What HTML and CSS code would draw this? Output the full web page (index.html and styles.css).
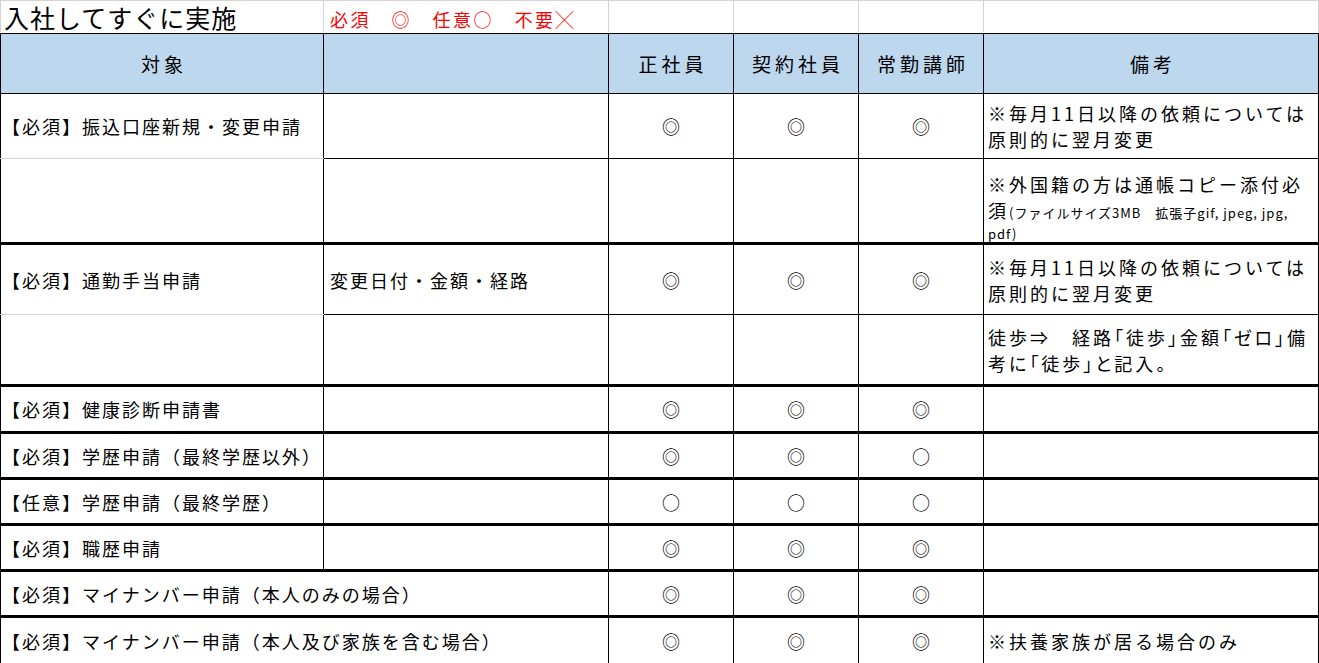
FILE: index.html
```html
<!DOCTYPE html>
<html lang="ja">
<head>
<meta charset="utf-8">
<title>入社してすぐに実施</title>
<link rel="stylesheet" href="styles.css">
</head>
<body>
<table class="sheet">
  <colgroup>
    <col class="col-a"><col class="col-b"><col class="col-m"><col class="col-m"><col class="col-m"><col class="col-f">
  </colgroup>
  <tr class="r-title">
    <td class="title">入社してすぐに実施</td>
    <td class="legend">必須　◎　任意○　不要╳</td>
    <td></td><td></td><td></td><td></td>
  </tr>
  <tr class="r-head">
    <th>対象</th><th></th><th>正社員</th><th>契約社員</th><th>常勤講師</th><th>備考</th>
  </tr>
  <tr class="r-65">
    <td class="item soft-bottom">【必須】振込口座新規・変更申請</td>
    <td class="sub"></td>
    <td class="mark">◎</td><td class="mark">◎</td><td class="mark">◎</td>
    <td class="note"><span class="ln">※毎月11日以降の依頼については</span><span class="ln">原則的に翌月変更</span></td>
  </tr>
  <tr class="r-85 thick">
    <td class="item"></td>
    <td class="sub"></td>
    <td class="mark"></td><td class="mark"></td><td class="mark"></td>
    <td class="note note-top"><span class="ln">※外国籍の方は通帳コピー添付必</span><span class="ln">須<span class="fine">(ファイルサイズ3MB　拡張子gif, jpeg, jpg,</span></span><span class="ln ln-fine">pdf)</span></td>
  </tr>
  <tr class="r-71">
    <td class="item soft-bottom">【必須】通勤手当申請</td>
    <td class="sub">変更日付・金額・経路</td>
    <td class="mark">◎</td><td class="mark">◎</td><td class="mark">◎</td>
    <td class="note"><span class="ln">※毎月11日以降の依頼については</span><span class="ln">原則的に翌月変更</span></td>
  </tr>
  <tr class="r-71 thick">
    <td class="item"></td>
    <td class="sub"></td>
    <td class="mark"></td><td class="mark"></td><td class="mark"></td>
    <td class="note note-prop"><span class="ln">徒歩⇒　経路「徒歩」金額「ゼロ」備</span><span class="ln">考に「徒歩」と記入。</span></td>
  </tr>
  <tr class="r-47 thick">
    <td class="item">【必須】健康診断申請書</td>
    <td class="sub"></td>
    <td class="mark">◎</td><td class="mark">◎</td><td class="mark">◎</td>
    <td class="note"></td>
  </tr>
  <tr class="r-46 thick">
    <td class="item">【必須】学歴申請（最終学歴以外）</td>
    <td class="sub"></td>
    <td class="mark">◎</td><td class="mark">◎</td><td class="mark">○</td>
    <td class="note"></td>
  </tr>
  <tr class="r-46 thick">
    <td class="item">【任意】学歴申請（最終学歴）</td>
    <td class="sub"></td>
    <td class="mark">○</td><td class="mark">○</td><td class="mark">○</td>
    <td class="note"></td>
  </tr>
  <tr class="r-46 thick">
    <td class="item">【必須】職歴申請</td>
    <td class="sub"></td>
    <td class="mark">◎</td><td class="mark">◎</td><td class="mark">◎</td>
    <td class="note"></td>
  </tr>
  <tr class="r-46 thick">
    <td class="item" colspan="2">【必須】マイナンバー申請（本人のみの場合）</td>
    <td class="mark">◎</td><td class="mark">◎</td><td class="mark">◎</td>
    <td class="note"></td>
  </tr>
  <tr class="r-47">
    <td class="item" colspan="2">【必須】マイナンバー申請（本人及び家族を含む場合）</td>
    <td class="mark">◎</td><td class="mark">◎</td><td class="mark">◎</td>
    <td class="note">※扶養家族が居る場合のみ</td>
  </tr>
</table>
</body>
</html>
```

FILE: styles.css
```css
html, body {
  margin: 0;
  padding: 0;
  background: #ffffff;
}

body {
  font-family: "Noto Sans CJK JP", "Noto Sans", sans-serif;
  color: #000000;
}

.sheet {
  border-collapse: collapse;
  table-layout: fixed;
  width: 1318px;
}

.col-a { width: 323px; }
.col-b { width: 285px; }
.col-m { width: 125px; }
.col-f { width: 335px; }

.sheet td,
.sheet th {
  box-sizing: border-box;
  border: 1px solid #000000;
  padding: 0 4px;
  font-size: 18px;
  font-weight: 400;
  letter-spacing: 2px;
  line-height: 26px;
  white-space: nowrap;
  vertical-align: middle;
  text-align: left;
}

/* title row (plain sheet area with light gridlines) */
.r-title > td {
  height: 33px;
  border-color: #d4d4d4;
  border-bottom-color: #000000;
  vertical-align: bottom;
}

.sheet .title {
  font-size: 25px;
  letter-spacing: 1px;
  line-height: 32px;
  padding-left: 3px;
}

.sheet .legend {
  color: #ff0000;
  font-size: 18px;
  letter-spacing: 2.5px;
  line-height: 28px;
  padding-left: 6px;
}

/* header */
.r-head > th {
  height: 60px;
  background: #bdd7ee;
  text-align: center;
  font-size: 19px;
  letter-spacing: 4px;
  padding: 0 4px 0 8px;
}

.r-65 > td { height: 65px; }
.r-85 > td { height: 85px; }
.r-71 > td { height: 71px; }
.r-47 > td { height: 47px; }
.r-46 > td { height: 46px; }

.thick > td { border-bottom-width: 3px; }

.sheet .soft-bottom { border-bottom-color: #d4d4d4; }

.sheet .item { padding-left: 1px; }
.sheet .sub { padding-left: 6px; }

.sheet .mark {
  text-align: center;
  letter-spacing: 0;
  padding: 0;
}

.sheet .note {
  letter-spacing: 3px;
  padding-left: 4px;
  padding-right: 0;
}

.note .ln { display: block; }

.note .fine {
  font-size: 13px;
  letter-spacing: 1px;
}

.note .ln-fine {
  font-size: 13px;
  letter-spacing: 1px;
  line-height: 16px;
}

.sheet .note-top {
  vertical-align: top;
  padding-top: 12px;
}

.note-prop {
  font-feature-settings: "palt";
}
```
